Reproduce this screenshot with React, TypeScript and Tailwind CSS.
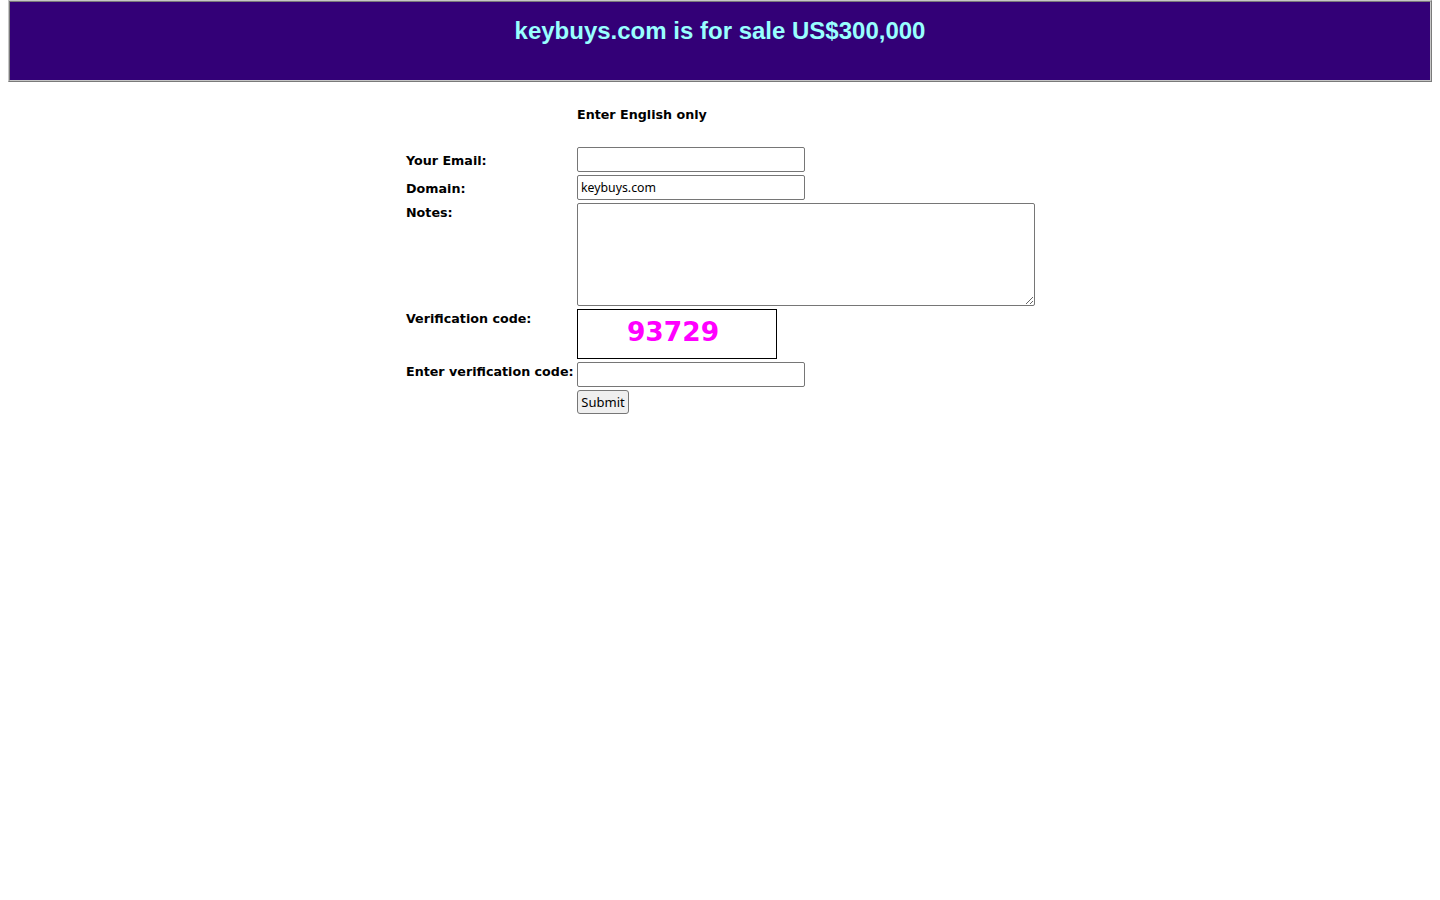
export default function App() {
  const label = 'whitespace-nowrap font-["DejaVu_Sans",Verdana,sans-serif] text-[12.7px] font-bold leading-[15px] text-black'
  const field = 'block border border-[#767676] rounded-[2px] bg-white px-[3px] font-["Noto_Sans",sans-serif] text-[12.3px] text-black outline-none'

  return (
    <div className="min-h-[900px] bg-white">
      {/* banner */}
      <div className="mx-[8px] border border-t-[#c6c6c6] border-l-[#c6c6c6] border-b-[#7a7a7a] border-r-[#7a7a7a]">
        <div className="h-[80px] border border-t-[#7a7a7a] border-l-[#7a7a7a] border-b-[#c6c6c6] border-r-[#c6c6c6] bg-[#330077] pt-[15px] text-center">
          <p className="font-['Liberation_Sans',Arial,sans-serif] text-[24px] font-bold leading-[28px] text-[#99ffff]">
            keybuys.com is for sale US$300,000
          </p>
        </div>
      </div>

      {/* form */}
      <div className="mx-auto w-[630px] pt-[25px]">
        <div className="flex">
          <div className="w-[172px]" />
          <p className={label}>Enter English only</p>
        </div>

        <div className="mt-[25px] flex flex-col gap-[3px]">
          <div className="flex">
            <div className={`w-[172px] pl-[1px] pt-[6px] ${label}`}>Your Email:</div>
            <input type="text" className={`${field} h-[25px] w-[228px]`} />
          </div>

          <div className="flex">
            <div className={`w-[172px] pl-[1px] pt-[6px] ${label}`}>Domain:</div>
            <input type="text" defaultValue="keybuys.com" className={`${field} h-[25px] w-[228px]`} />
          </div>

          <div className="flex">
            <div className={`w-[172px] pl-[1px] pt-[2px] ${label}`}>Notes:</div>
            <textarea className={`${field} h-[103px] w-[458px]`} />
          </div>

          <div className="flex">
            <div className={`w-[172px] pl-[1px] pt-[2px] ${label}`}>Verification code:</div>
            <div className="flex h-[50px] w-[200px] items-center justify-center border border-black pr-[8px] pb-[4px]">
              <span className="font-['DejaVu_Sans',Verdana,sans-serif] text-[26.5px] font-bold leading-[30px] text-[#ff00ff]">93729</span>
            </div>
          </div>

          <div className="flex">
            <div className={`w-[172px] pl-[1px] pt-[2px] ${label}`}>Enter verification code:</div>
            <input type="text" className={`${field} h-[25px] w-[228px]`} />
          </div>

          <div className="flex">
            <div className="w-[172px]" />
            <button
              type="button"
              className="h-[24px] w-[52px] rounded-[3px] border border-[#767676] bg-[#efefef] font-['Noto_Sans',sans-serif] text-[13px] leading-[20px] text-black"
            >
              Submit
            </button>
          </div>
        </div>
      </div>
    </div>
  )
}
